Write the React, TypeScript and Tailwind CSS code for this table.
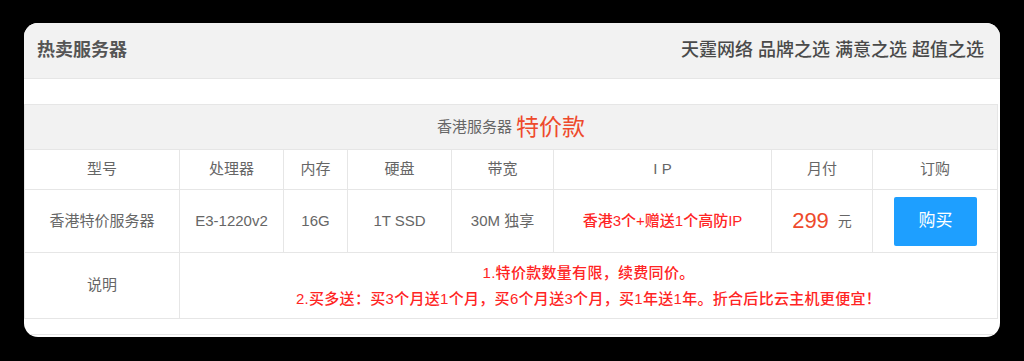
import React from "react";

const font = "font-['Liberation_Sans','Noto_Sans_CJK_SC',sans-serif]";

const cols = [
  "w-[155px] border-r",
  "w-[104px] border-r",
  "w-[64px] border-r",
  "w-[104px] border-r",
  "w-[102px] border-r",
  "w-[218px] border-r",
  "w-[101px] border-r",
  "flex-1",
];

export default function App() {
  const heads = ["型号", "处理器", "内存", "硬盘", "带宽", "I P", "月付", "订购"];
  return (
    <div className={`w-[1024px] h-[361px] bg-black pt-[23px] pl-[24px] ${font}`}>
      <div className="w-[976px] h-[314px] rounded-[14px] bg-white overflow-hidden flex flex-col">
        <div className="h-[56px] shrink-0 bg-[#f2f2f2] border-b border-[#e6e6e6] flex items-center justify-between pl-[13px] pr-[16px]">
          <span className="text-[18px] font-bold text-[#555]">热卖服务器</span>
          <span className="text-[18px] font-medium text-[#4a4a4a]">天霆网络 品牌之选 满意之选 超值之选</span>
        </div>
        <div className="h-[25px] shrink-0" />
        <div className="w-[974px] border border-[#e6e6e6] text-[15px] text-[#666]">
          <div className="h-[45px] bg-[#f2f2f2] border-b border-[#e6e6e6] flex items-center justify-center gap-[4px]">
            <span className="text-[15px] text-[#666]">香港服务器</span>
            <span className="text-[23px] text-[#ee4a2c] leading-none">特价款</span>
          </div>
          <div className="h-[40px] border-b border-[#e6e6e6] flex">
            {heads.map((h, i) => (
              <div key={i} className={`${cols[i]} border-[#e6e6e6] flex items-center justify-center`}>
                {h}
              </div>
            ))}
          </div>
          <div className="h-[63px] border-b border-[#e6e6e6] flex">
            <div className={`${cols[0]} border-[#e6e6e6] flex items-center justify-center`}>香港特价服务器</div>
            <div className={`${cols[1]} border-[#e6e6e6] flex items-center justify-center`}>E3-1220v2</div>
            <div className={`${cols[2]} border-[#e6e6e6] flex items-center justify-center`}>16G</div>
            <div className={`${cols[3]} border-[#e6e6e6] flex items-center justify-center`}>1T SSD</div>
            <div className={`${cols[4]} border-[#e6e6e6] flex items-center justify-center`}>30M 独享</div>
            <div className={`${cols[5]} border-[#e6e6e6] flex items-center justify-center text-[#ff2424] font-medium`}>香港3个+赠送1个高防IP</div>
            <div className={`${cols[6]} border-[#e6e6e6] flex items-center justify-center`}>
              <span className="text-[22px] text-[#ee4a2c] leading-none">299</span>
              <span className="text-[14px] text-[#666] ml-[9px]">元</span>
            </div>
            <div className={`${cols[7]} flex items-center pl-[21px]`}>
              <div className="w-[83px] h-[49px] rounded-[2px] bg-[#1e9fff] text-white text-[17px] flex items-center justify-center">购买</div>
            </div>
          </div>
          <div className="h-[65px] flex">
            <div className={`${cols[0]} border-[#e6e6e6] flex items-center justify-center`}>说明</div>
            <div className="flex-1 flex flex-col items-center justify-center text-[#ff2424] font-medium leading-[26px] tracking-[0.3px]">
              <div>1.特价款数量有限，续费同价。</div>
              <div>2.买多送：买3个月送1个月，买6个月送3个月，买1年送1年。折合后比云主机更便宜！</div>
            </div>
          </div>
        </div>
        <div className="h-[16px] shrink-0 border-b border-[#e6e6e6]" />
      </div>
    </div>
  );
}
